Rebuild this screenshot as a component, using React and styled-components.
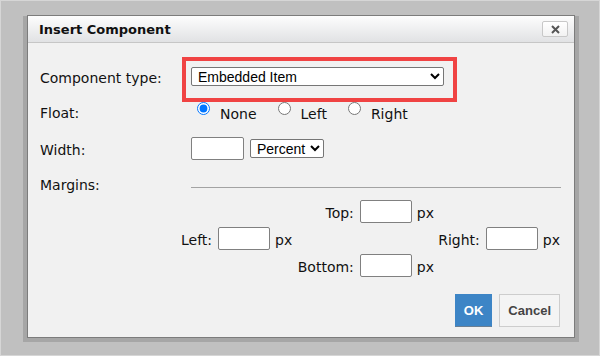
import React from "react";
import styled, { createGlobalStyle } from "styled-components";

const Global = createGlobalStyle`
  html, body { margin: 0; padding: 0; }
  body { font-family: "DejaVu Sans", Verdana, sans-serif; }
  * { box-sizing: border-box; }
`;

const Page = styled.div`
  width: 600px;
  height: 356px;
  background: #c0c0c0;
  border: 1px solid #d6d6d6;
  padding: 14px 0 0 26px;
`;

const Dialog = styled.div`
  width: 548px;
  height: 323px;
  background: #f1f1f1;
  border: 1px solid #7c7c7c;
  box-shadow: -4px 1px 0 0 #a6a6a6, 4px 1px 0 0 #a6a6a6, -4px 4px 0 0 #a6a6a6,
    4px 4px 0 0 #a6a6a6;
  display: flex;
  flex-direction: column;
`;

const TitleBar = styled.div`
  height: 27px;
  flex: none;
  display: flex;
  align-items: center;
  justify-content: space-between;
  padding: 0 6px 0 11px;
  background: linear-gradient(#fdfdfd, #e1e2e4);
  border-bottom: 1px solid #c6c6c6;
`;

const Title = styled.div`
  font: bold 13px "DejaVu Sans", Verdana, sans-serif;
  color: #111;
  padding-top: 1px;
`;

const CloseButton = styled.button`
  width: 26px;
  height: 16px;
  margin: 0;
  padding: 0;
  border: 1px solid #c8c8c8;
  border-radius: 2px;
  background: linear-gradient(#ffffff, #f2f2f2);
  display: flex;
  align-items: center;
  justify-content: center;
`;

const Body = styled.div`
  flex: 1;
  padding: 19px 0 0 12px;
  display: flex;
  flex-direction: column;
`;

const Row = styled.div`
  display: grid;
  grid-template-columns: 151px 1fr;
  align-items: center;
  height: ${(p) => p.$h}px;
`;

const Label = styled.div`
  font-size: 14px;
  color: #111;
  padding-top: ${(p) => p.$pt || 0}px;
`;

const Anchor = styled.div`
  position: relative;
  width: max-content;
`;

const Highlight = styled.div`
  position: absolute;
  left: -9px;
  top: -10px;
  width: 275px;
  height: 45px;
  border: 4px solid #f04343;
  pointer-events: none;
`;

const Select = styled.select`
  display: block;
  width: ${(p) => p.$w}px;
  height: 19px;
  padding: 0 0 0 2px;
  font: 14px "Liberation Sans", Arial, sans-serif;
  color: #000;
  background: #fff;
  border: 1px solid #767676;
  border-radius: 2px;
  margin: 0;
`;

const Radios = styled.div`
  display: flex;
  padding-left: 6px;
  gap: 21px;
`;

const RadioOption = styled.label`
  display: flex;
  align-items: flex-start;
  font-size: 14px;
  color: #111;
`;

const Radio = styled.input`
  width: 13px;
  height: 13px;
  margin: 1px 10px 0 0;
`;

const RadioText = styled.span`
  padding-top: 5px;
`;

const Inline = styled.div`
  display: flex;
  align-items: center;
  gap: 6px;
`;

const TextBox = styled.input`
  width: ${(p) => p.$w}px;
  height: 23px;
  margin: 0;
  padding: 1px 2px;
  border: 1px solid #808080;
  border-radius: 2px;
  background: #fff;
`;

const Rule = styled.div`
  height: 1px;
  background: #a3a3a3;
  width: 370px;
  margin-top: 10px;
`;

const MarginGrid = styled.div`
  display: grid;
  margin-left: 141px;
  grid-template-columns: 116px 137px 126px;
  grid-template-rows: 23px 23px 23px;
  row-gap: 4px;
  align-items: center;
`;

const MarginField = styled.div`
  grid-column: ${(p) => p.$col};
  grid-row: ${(p) => p.$row};
  justify-self: ${(p) => p.$justify};
  display: flex;
  align-items: center;
  font-size: 14px;
  color: #111;
`;

const FieldLabel = styled.span`
  margin-right: 6px;
  padding-top: 2px;
`;

const Unit = styled.span`
  margin-left: 5px;
  padding-top: 2px;
`;

const Footer = styled.div`
  display: flex;
  justify-content: flex-end;
  gap: 7px;
  padding: 0 14px 10px 0;
`;

const Button = styled.button`
  height: 33px;
  margin: 0;
  padding: 0 8px;
  font: bold 13px "Liberation Sans", Arial, sans-serif;
  color: ${(p) => (p.$primary ? "#fff" : "#444")};
  background: ${(p) => (p.$primary ? "#3d85c6" : "#f4f4f4")};
  border: 1px solid ${(p) => (p.$primary ? "#3d85c6" : "#cdcdcd")};
  border-bottom-color: ${(p) => (p.$primary ? "#6b7f92" : "#cdcdcd")};
  border-radius: 0;
`;

function Margin({ label, col, row, justify }) {
  return (
    <MarginField $col={col} $row={row} $justify={justify}>
      <FieldLabel>{label}</FieldLabel>
      <TextBox $w={52} type="text" />
      <Unit>px</Unit>
    </MarginField>
  );
}

export default function App() {
  return (
    <>
      <Global />
      <Page>
        <Dialog>
          <TitleBar>
            <Title>Insert Component</Title>
            <CloseButton aria-label="Close">
              <svg width="9" height="9" viewBox="0 0 9 9">
                <path d="M1 1 L8 8 M8 1 L1 8" stroke="#555" strokeWidth="2" />
              </svg>
            </CloseButton>
          </TitleBar>
          <Body>
            <Row $h={29}>
              <Label $pt={2}>Component type:</Label>
              <Anchor>
                <Select $w={253} defaultValue="embedded">
                  <option value="embedded">Embedded Item</option>
                </Select>
                <Highlight />
              </Anchor>
            </Row>
            <Row $h={41}>
              <Label $pt={2}>Float:</Label>
              <Radios>
                <RadioOption>
                  <Radio type="radio" name="float" defaultChecked />
                  <RadioText>None</RadioText>
                </RadioOption>
                <RadioOption>
                  <Radio type="radio" name="float" />
                  <RadioText>Left</RadioText>
                </RadioOption>
                <RadioOption>
                  <Radio type="radio" name="float" />
                  <RadioText>Right</RadioText>
                </RadioOption>
              </Radios>
            </Row>
            <Row $h={33}>
              <Label $pt={2}>Width:</Label>
              <Inline>
                <TextBox $w={53} type="text" />
                <Select $w={74} defaultValue="percent">
                  <option value="percent">Percent</option>
                </Select>
              </Inline>
            </Row>
            <Row $h={35}>
              <Label $pt={4}>Margins:</Label>
              <Rule />
            </Row>
            <MarginGrid>
              <Margin label="Top:" col={2} row={1} justify="end" />
              <Margin label="Left:" col={1} row={2} justify="start" />
              <Margin label="Right:" col={3} row={2} justify="end" />
              <Margin label="Bottom:" col={2} row={3} justify="end" />
            </MarginGrid>
          </Body>
          <Footer>
            <Button $primary>OK</Button>
            <Button>Cancel</Button>
          </Footer>
        </Dialog>
      </Page>
    </>
  );
}
